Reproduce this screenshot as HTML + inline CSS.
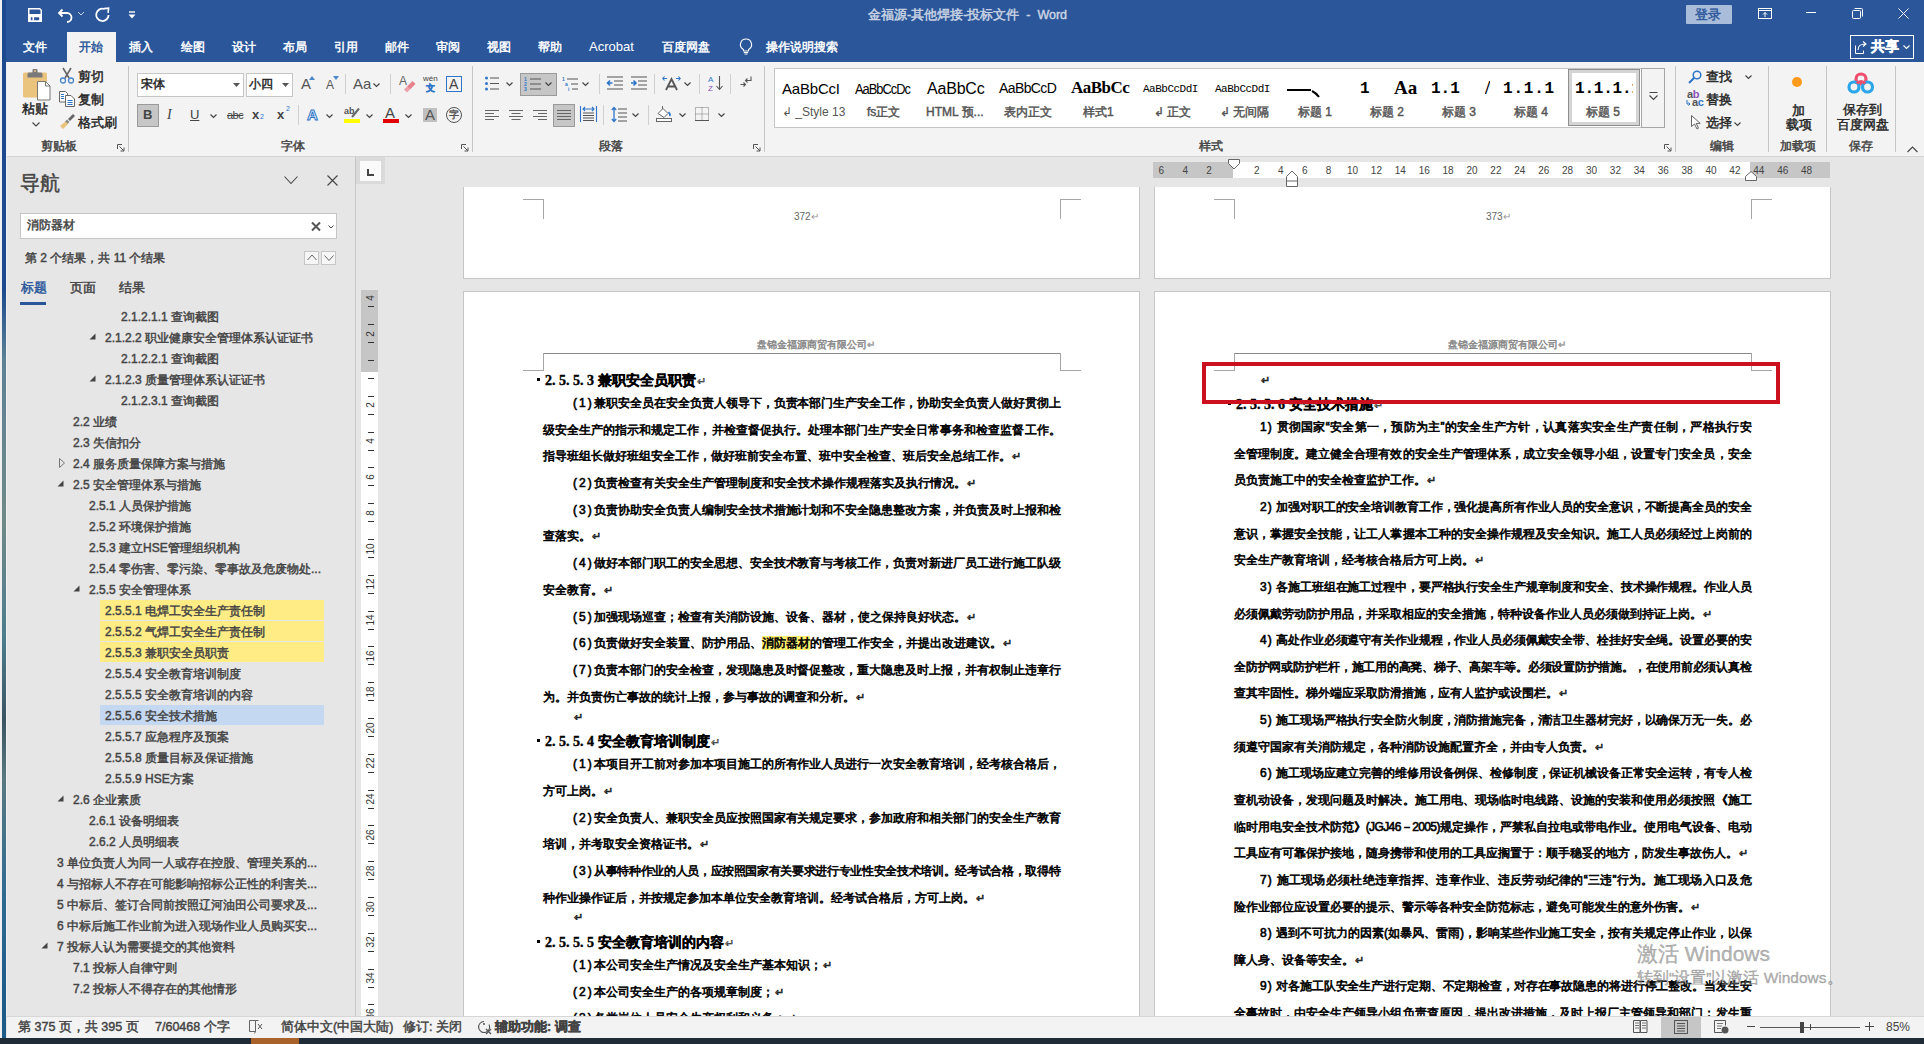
<!DOCTYPE html>
<html><head><meta charset="utf-8"><style>
html,body{margin:0;padding:0;}
body{width:1924px;height:1044px;position:relative;overflow:hidden;background:#e6e6e6;font-family:"Liberation Sans",sans-serif;}
div{box-sizing:border-box;}
.ui{font-size:13px;color:#262626;line-height:16px;}
.tab{font-size:13px;color:#fff;line-height:16px;}
.nav{font-size:13px;color:#444;line-height:16px;}
.doc{font-size:12px;color:#000;line-height:16px;-webkit-text-stroke:0.6px #000;}
.cj{-webkit-text-stroke-width:0.45px;}
.just{text-align:justify;text-align-last:justify;letter-spacing:-0.6px;}
.rm{color:#a0a0a0;font-size:11px;font-weight:normal;margin-left:1px}
.h{font-size:14px;font-weight:bold;color:#000;line-height:18px;-webkit-text-stroke:0.4px #000;}
svg{position:absolute;overflow:visible;}
</style></head><body>
<div style="position:absolute;left:0px;top:0px;width:1924px;height:62px;background:#2b579a"></div>
<div style="position:absolute;left:0px;top:0px;width:2px;height:1044px;background:#f0f0f0"></div>
<div style="position:absolute;left:2px;top:0px;width:4px;height:1044px;background:linear-gradient(#1c4a8e 0px,#1c4a8e 290px,#5c8295 360px,#6f8a88 520px,#4c7c8c 640px,#3a5560 720px,#587a80 780px,#2d6a92 900px,#1c5a88 1010px)"></div>
<div style="position:absolute;left:6px;top:62px;width:1px;height:954px;background:#f2f0f0"></div>
<div class="cj" style="position: absolute; left: 868px; top: 7px; white-space: nowrap; font-size: 12.5px; color: rgb(201, 211, 227); line-height: 16px; width: 199px; text-align: justify; text-align-last: justify;">金福源-其他焊接-投标文件&nbsp; - &nbsp;Word</div>
<svg style="left:27px;top:7px" width="16" height="16" viewBox="0 0 16 16"><path d="M1.75 1.75h11l1.5 1.5v11h-12.5z" fill="none" stroke="#fff" stroke-width="1.5"></path><rect x="1.5" y="7" width="13" height="2.5" fill="#fff"></rect><path d="M1.5 9h13v5.5h-13z M3.8 10.2v3.4h8.4v-3.4z" fill="#fff" fill-rule="evenodd"></path><rect x="5.5" y="10" width="1.6" height="3.6" fill="#fff"></rect></svg>
<svg style="left:57px;top:7px" width="16" height="16" viewBox="0 0 16 16"><path d="M2 6h8a4.5 4.5 0 0 1 0 9" fill="none" stroke="#fff" stroke-width="1.8"></path><path d="M5.5 2.5L2 6l3.5 3.5" fill="none" stroke="#fff" stroke-width="1.8"></path></svg>
<svg style="left:77px;top:11px" width="8" height="6" viewBox="0 0 8 6"><path d="M1 1l3 3 3-3" fill="none" stroke="#c9d3e3" stroke-width="1"></path></svg>
<svg style="left:95px;top:7px" width="16" height="16" viewBox="0 0 16 16"><path d="M9.5 2A6.2 6.2 0 1 0 13.6 8" fill="none" stroke="#fff" stroke-width="1.8"></path><path d="M9 1.6L13.6 1.2 13.1 5.8" fill="none" stroke="#fff" stroke-width="1.6"></path></svg>
<svg style="left:128px;top:11px" width="8" height="9" viewBox="0 0 8 9"><path d="M1 1h6" stroke="#fff" stroke-width="1.4"></path><path d="M0.5 3.5h7l-3.5 4z" fill="#fff"></path></svg>
<div style="position:absolute;left:1686px;top:5px;width:46px;height:19px;background:#a9bcd9;border-radius:1px"></div>
<div class="cj" style="position: absolute; left: 1695px; top: 7px; white-space: nowrap; font-size: 13px; color: rgb(43, 87, 154); line-height: 16px; width: 26px; text-align: justify; text-align-last: justify;">登录</div>
<svg style="left:1758px;top:8px" width="14" height="11" viewBox="0 0 14 11"><rect x="0.5" y="0.5" width="13" height="10" fill="none" stroke="#fff" stroke-width="1"></rect><path d="M0.5 2.5h13" stroke="#fff"></path><path d="M7 9V4.5M5 6.5l2-2 2 2" fill="none" stroke="#fff"></path></svg>
<div style="position:absolute;left:1806px;top:12px;width:10px;height:1px;background:#fff"></div>
<svg style="left:1852px;top:8px" width="11" height="11" viewBox="0 0 11 11"><rect x="0.5" y="2.5" width="8" height="8" rx="1" fill="none" stroke="#fff"></rect><path d="M2.5 0.5h7a1 1 0 0 1 1 1v7" fill="none" stroke="#fff"></path></svg>
<svg style="left:1898px;top:8px" width="11" height="11" viewBox="0 0 11 11"><path d="M0.5 0.5l10 10M10.5 0.5l-10 10" stroke="#fff" stroke-width="1"></path></svg>
<div style="position:absolute;left:1850px;top:35px;width:64px;height:24px;border:1px solid #fff"></div>
<svg style="left:1855px;top:40px" width="13" height="14" viewBox="0 0 13 14"><path d="M0.5 5.5v8h8v-3" fill="none" stroke="#fff"></path><path d="M3 10c0-4 3-6 7-6M8 1.5l3 2.5-3 2.5" fill="none" stroke="#fff" stroke-width="1.1"></path></svg>
<div class="cj" style="position: absolute; left: 1871px; top: 38px; white-space: nowrap; font-size: 14px; color: rgb(255, 255, 255); font-weight: bold; line-height: 17px; width: 28px; text-align: justify; text-align-last: justify;">共享</div>
<svg style="left:1903px;top:45px" width="7" height="5" viewBox="0 0 7 5"><path d="M0.5 0.5l3 3 3-3" fill="none" stroke="#fff" stroke-width="1.2"></path></svg>
<div style="position:absolute;left:67px;top:32px;width:49px;height:30px;background:#f3f3f3"></div>
<div class="cj" style="position: absolute; left: 23px; top: 39px; white-space: nowrap; font-size: 12px; color: rgb(255, 255, 255); line-height: 16px; width: 24px; text-align: justify; text-align-last: justify;">文件</div>
<div class="cj" style="position: absolute; left: 79px; top: 39px; white-space: nowrap; font-size: 12px; color: rgb(43, 87, 154); line-height: 16px; width: 24px; text-align: justify; text-align-last: justify;">开始</div>
<div class="cj" style="position: absolute; left: 129px; top: 39px; white-space: nowrap; font-size: 12px; color: rgb(255, 255, 255); line-height: 16px; width: 24px; text-align: justify; text-align-last: justify;">插入</div>
<div class="cj" style="position: absolute; left: 181px; top: 39px; white-space: nowrap; font-size: 12px; color: rgb(255, 255, 255); line-height: 16px; width: 24px; text-align: justify; text-align-last: justify;">绘图</div>
<div class="cj" style="position: absolute; left: 232px; top: 39px; white-space: nowrap; font-size: 12px; color: rgb(255, 255, 255); line-height: 16px; width: 24px; text-align: justify; text-align-last: justify;">设计</div>
<div class="cj" style="position: absolute; left: 283px; top: 39px; white-space: nowrap; font-size: 12px; color: rgb(255, 255, 255); line-height: 16px; width: 24px; text-align: justify; text-align-last: justify;">布局</div>
<div class="cj" style="position: absolute; left: 334px; top: 39px; white-space: nowrap; font-size: 12px; color: rgb(255, 255, 255); line-height: 16px; width: 24px; text-align: justify; text-align-last: justify;">引用</div>
<div class="cj" style="position: absolute; left: 385px; top: 39px; white-space: nowrap; font-size: 12px; color: rgb(255, 255, 255); line-height: 16px; width: 24px; text-align: justify; text-align-last: justify;">邮件</div>
<div class="cj" style="position: absolute; left: 436px; top: 39px; white-space: nowrap; font-size: 12px; color: rgb(255, 255, 255); line-height: 16px; width: 24px; text-align: justify; text-align-last: justify;">审阅</div>
<div class="cj" style="position: absolute; left: 487px; top: 39px; white-space: nowrap; font-size: 12px; color: rgb(255, 255, 255); line-height: 16px; width: 24px; text-align: justify; text-align-last: justify;">视图</div>
<div class="cj" style="position: absolute; left: 538px; top: 39px; white-space: nowrap; font-size: 12px; color: rgb(255, 255, 255); line-height: 16px; width: 24px; text-align: justify; text-align-last: justify;">帮助</div>
<div style="position:absolute;left:589px;top:39px;white-space:nowrap;font-size:13px;color:#fff;line-height:16px">Acrobat</div>
<div class="cj" style="position: absolute; left: 662px; top: 39px; white-space: nowrap; font-size: 12px; color: rgb(255, 255, 255); line-height: 16px; width: 48px; text-align: justify; text-align-last: justify;">百度网盘</div>
<div class="cj" style="position: absolute; left: 766px; top: 39px; white-space: nowrap; font-size: 12px; color: rgb(255, 255, 255); line-height: 16px; width: 72px; text-align: justify; text-align-last: justify;">操作说明搜索</div>
<svg style="left:739px;top:38px" width="14" height="17" viewBox="0 0 14 17"><path d="M7 1a5.5 5.5 0 0 0-3.2 10c.7.6.9 1.2.9 2h4.6c0-.8.2-1.4.9-2A5.5 5.5 0 0 0 7 1z" fill="none" stroke="#fff" stroke-width="1.1"></path><path d="M4.8 14.5h4.4M5.5 16h3" stroke="#fff" stroke-width="1"></path></svg>
<div style="position:absolute;left:7px;top:62px;width:1917px;height:94px;background:#f3f3f3"></div>
<div style="position:absolute;left:7px;top:156px;width:1917px;height:1px;background:#d4d4d4"></div>
<div style="position:absolute;left:128px;top:66px;width:1px;height:86px;background:#c6c6c6"></div>
<div style="position:absolute;left:472px;top:66px;width:1px;height:86px;background:#c6c6c6"></div>
<div style="position:absolute;left:764px;top:66px;width:1px;height:86px;background:#c6c6c6"></div>
<div style="position:absolute;left:1675px;top:66px;width:1px;height:86px;background:#c6c6c6"></div>
<div style="position:absolute;left:1768px;top:66px;width:1px;height:86px;background:#c6c6c6"></div>
<div style="position:absolute;left:1826px;top:66px;width:1px;height:86px;background:#c6c6c6"></div>
<div style="position:absolute;left:1895px;top:66px;width:1px;height:86px;background:#c6c6c6"></div>
<div class="cj" style="position: absolute; left: 41px; top: 139px; white-space: nowrap; font-size: 12px; color: rgb(68, 68, 68); line-height: 15px; width: 36px; text-align: justify; text-align-last: justify;">剪贴板</div>
<div class="cj" style="position: absolute; left: 281px; top: 139px; white-space: nowrap; font-size: 12px; color: rgb(68, 68, 68); line-height: 15px; width: 24px; text-align: justify; text-align-last: justify;">字体</div>
<div class="cj" style="position: absolute; left: 599px; top: 139px; white-space: nowrap; font-size: 12px; color: rgb(68, 68, 68); line-height: 15px; width: 24px; text-align: justify; text-align-last: justify;">段落</div>
<div class="cj" style="position: absolute; left: 1199px; top: 139px; white-space: nowrap; font-size: 12px; color: rgb(68, 68, 68); line-height: 15px; width: 24px; text-align: justify; text-align-last: justify;">样式</div>
<div class="cj" style="position: absolute; left: 1710px; top: 139px; white-space: nowrap; font-size: 12px; color: rgb(68, 68, 68); line-height: 15px; width: 24px; text-align: justify; text-align-last: justify;">编辑</div>
<div class="cj" style="position: absolute; left: 1780px; top: 139px; white-space: nowrap; font-size: 12px; color: rgb(68, 68, 68); line-height: 15px; width: 36px; text-align: justify; text-align-last: justify;">加载项</div>
<div class="cj" style="position: absolute; left: 1849px; top: 139px; white-space: nowrap; font-size: 12px; color: rgb(68, 68, 68); line-height: 15px; width: 24px; text-align: justify; text-align-last: justify;">保存</div>
<svg style="left:117px;top:144px" width="8" height="8" viewBox="0 0 8 8"><path d="M0.5 5V0.5H5" fill="none" stroke="#555"></path><path d="M2.5 2.5l4.5 4.5M7 3.5v3.5H3.5" fill="none" stroke="#555"></path></svg>
<svg style="left:461px;top:144px" width="8" height="8" viewBox="0 0 8 8"><path d="M0.5 5V0.5H5" fill="none" stroke="#555"></path><path d="M2.5 2.5l4.5 4.5M7 3.5v3.5H3.5" fill="none" stroke="#555"></path></svg>
<svg style="left:753px;top:144px" width="8" height="8" viewBox="0 0 8 8"><path d="M0.5 5V0.5H5" fill="none" stroke="#555"></path><path d="M2.5 2.5l4.5 4.5M7 3.5v3.5H3.5" fill="none" stroke="#555"></path></svg>
<svg style="left:1664px;top:144px" width="8" height="8" viewBox="0 0 8 8"><path d="M0.5 5V0.5H5" fill="none" stroke="#555"></path><path d="M2.5 2.5l4.5 4.5M7 3.5v3.5H3.5" fill="none" stroke="#555"></path></svg>
<svg style="left:1907px;top:146px" width="11" height="7" viewBox="0 0 11 7"><path d="M0.5 6l5-5 5 5" fill="none" stroke="#444" stroke-width="1.1"></path></svg>
<svg style="left:22px;top:68px" width="30" height="33" viewBox="0 0 30 33"><rect x="1" y="4.5" width="24" height="25" rx="1.5" fill="#eac37c"></rect><path d="M5.5 9.5v-3.5a1.5 1.5 0 0 1 1.5-1.5h3.5v-2.5a1 1 0 0 1 1-1h3a1 1 0 0 1 1 1v2.5h3.5a1.5 1.5 0 0 1 1.5 1.5v3.5z" fill="#7a7a7a"></path><circle cx="13" cy="3" r="1" fill="#eac37c"></circle><path d="M15.5 13.5h8l4.5 4.5v14h-12.5z" fill="#fff" stroke="#777" stroke-width="1"></path><path d="M23.5 13.5v4.5h4.5" fill="none" stroke="#777"></path></svg>
<div class="cj" style="position: absolute; left: 22px; top: 101px; white-space: nowrap; font-size: 13px; color: rgb(38, 38, 38); line-height: 16px; width: 26px; text-align: justify; text-align-last: justify;">粘贴</div>
<svg style="left:32px;top:122px" width="8" height="5" viewBox="0 0 8 5"><path d="M0.5 0.5l3.5 3.5 3.5-3.5" fill="none" stroke="#444" stroke-width="1.1"></path></svg>
<svg style="left:59px;top:67px" width="16" height="17" viewBox="0 0 16 17"><path d="M4 1l6 10M12 1L6 11" stroke="#666" stroke-width="1.6"></path><circle cx="4" cy="13.5" r="2.5" fill="none" stroke="#4a86c8" stroke-width="1.3"></circle><circle cx="12" cy="13.5" r="2.5" fill="none" stroke="#4a86c8" stroke-width="1.3"></circle></svg>
<div class="cj" style="position: absolute; left: 78px; top: 69px; white-space: nowrap; font-size: 13px; color: rgb(38, 38, 38); line-height: 16px; width: 26px; text-align: justify; text-align-last: justify;">剪切</div>
<svg style="left:59px;top:91px" width="16" height="16" viewBox="0 0 16 16"><path d="M0.5 0.5h6l2 2v8.5h-8z" fill="#fff" stroke="#666"></path><path d="M6.5 4.5h5.5l3.5 3.5v7.5h-9z" fill="#fff" stroke="#666"></path><path d="M2 3.5h3M2 5.5h3M2 7.5h3M8.5 9.5h5M8.5 11.5h5M8.5 13.5h5" stroke="#2e75c8" stroke-width="1"></path></svg>
<div class="cj" style="position: absolute; left: 78px; top: 92px; white-space: nowrap; font-size: 13px; color: rgb(38, 38, 38); line-height: 16px; width: 26px; text-align: justify; text-align-last: justify;">复制</div>
<svg style="left:59px;top:114px" width="16" height="15" viewBox="0 0 16 15"><path d="M9 5l5-5 2 2-5 5z" fill="#666"></path><path d="M8 5.5l2.5 2.5-2 2-2.5-2.5z" fill="#888"></path><path d="M6.5 7.5l2.5 2.5L4 15 1 12z" fill="#e9c27a"></path></svg>
<div class="cj" style="position: absolute; left: 78px; top: 115px; white-space: nowrap; font-size: 13px; color: rgb(38, 38, 38); line-height: 16px; width: 39px; text-align: justify; text-align-last: justify;">格式刷</div>
<div style="position:absolute;left:137px;top:73px;width:107px;height:24px;background:#fff;border:1px solid #c6c6c6"></div>
<div class="cj" style="position: absolute; left: 141px; top: 77px; white-space: nowrap; font-size: 12px; color: rgb(38, 38, 38); line-height: 15px; width: 24px; text-align: justify; text-align-last: justify;">宋体</div>
<svg style="left:233px;top:83px" width="7" height="4" viewBox="0 0 7 4"><path d="M0 0h7L3.5 4z" fill="#555"></path></svg>
<div style="position:absolute;left:246px;top:73px;width:47px;height:24px;background:#fff;border:1px solid #c6c6c6"></div>
<div class="cj" style="position: absolute; left: 249px; top: 77px; white-space: nowrap; font-size: 12px; color: rgb(38, 38, 38); line-height: 15px; width: 24px; text-align: justify; text-align-last: justify;">小四</div>
<svg style="left:282px;top:83px" width="7" height="4" viewBox="0 0 7 4"><path d="M0 0h7L3.5 4z" fill="#555"></path></svg>
<div style="position:absolute;left:301px;top:75px;white-space:nowrap;font-size:15px;color:#555;line-height:17px">A</div>
<svg style="left:309px;top:76px" width="6" height="4" viewBox="0 0 6 4"><path d="M0 4h6L3 0z" fill="#4a86c8"></path></svg>
<div style="position:absolute;left:326px;top:78px;white-space:nowrap;font-size:12px;color:#555;line-height:14px">A</div>
<svg style="left:333px;top:76px" width="6" height="4" viewBox="0 0 6 4"><path d="M0 0h6L3 4z" fill="#4a86c8"></path></svg>
<div style="position:absolute;left:345px;top:74px;width:1px;height:20px;background:#d0d0d0"></div>
<div style="position:absolute;left:353px;top:75px;white-space:nowrap;font-size:15px;color:#555;line-height:17px">Aa</div>
<svg style="left:373px;top:83px" width="7" height="5" viewBox="0 0 7 5"><path d="M0.5 0.5l3 3 3-3" fill="none" stroke="#444" stroke-width="1.2"></path></svg>
<div style="position:absolute;left:390px;top:74px;width:1px;height:20px;background:#d0d0d0"></div>
<div style="position:absolute;left:399px;top:74px;white-space:nowrap;font-size:12px;color:#666;line-height:14px">A</div>
<svg style="left:401px;top:78px" width="15" height="15" viewBox="0 0 15 15"><path d="M6 8.5L11.5 3 14.5 6 9 11.5z" fill="#e8818f"></path><path d="M3 11.5L6 8.5 9 11.5 6 14.5z" fill="#f0a0aa"></path></svg>
<div style="position:absolute;left:423px;top:74px;white-space:nowrap;font-size:8px;color:#444;line-height:9px">wén</div>
<div class="cj" style="position: absolute; left: 426px; top: 83px; white-space: nowrap; font-size: 9px; color: rgb(46, 117, 200); line-height: 10px; font-weight: bold; width: 9px; text-align: justify; text-align-last: justify;">文</div>
<div style="position:absolute;left:446px;top:76px;width:16px;height:16px;border:1px solid #2e75c8"></div>
<div style="position:absolute;left:449px;top:76px;white-space:nowrap;font-size:14px;color:#444;line-height:16px">A</div>
<div style="position:absolute;left:139px;top:104px;white-space:nowrap;"></div>
<div style="position:absolute;left:137px;top:104px;width:22px;height:23px;background:#c6c6c6;border:1px solid #9a9a9a"></div>
<div style="position:absolute;left:143px;top:107px;white-space:nowrap;font-size:13px;color:#444;font-weight:bold;line-height:16px">B</div>
<div style="position:absolute;left:167px;top:107px;white-space:nowrap;font-size:14px;color:#444;font-family:Liberation Serif;font-style:italic;line-height:16px">I</div>
<div style="position:absolute;left:190px;top:107px;white-space:nowrap;font-size:13px;color:#444;line-height:15px;text-decoration:underline">U</div>
<svg style="left:210px;top:114px" width="7" height="5" viewBox="0 0 7 5"><path d="M0.5 0.5l3 3 3-3" fill="none" stroke="#444" stroke-width="1.2"></path></svg>
<div style="position:absolute;left:227px;top:108px;white-space:nowrap;font-size:11px;color:#444;line-height:14px;letter-spacing:-0.5px"><s>abc</s></div>
<div style="position:absolute;left:252px;top:107px;white-space:nowrap;font-size:13px;color:#444;font-weight:bold;line-height:15px">x</div>
<div style="position:absolute;left:260px;top:113px;white-space:nowrap;font-size:7px;color:#2e75c8;line-height:8px">2</div>
<div style="position:absolute;left:277px;top:107px;white-space:nowrap;font-size:13px;color:#444;font-weight:bold;line-height:15px">x</div>
<div style="position:absolute;left:286px;top:105px;white-space:nowrap;font-size:7px;color:#2e75c8;line-height:8px">2</div>
<div style="position:absolute;left:298px;top:105px;width:1px;height:20px;background:#d0d0d0"></div>
<div style="position:absolute;left:307px;top:106px;white-space:nowrap;font-size:15px;color:#fff;font-weight:bold;line-height:17px;-webkit-text-stroke:1px #2e75c8">A</div>
<svg style="left:326px;top:114px" width="7" height="5" viewBox="0 0 7 5"><path d="M0.5 0.5l3 3 3-3" fill="none" stroke="#444" stroke-width="1.2"></path></svg>
<div style="position:absolute;left:344px;top:106px;white-space:nowrap;font-size:9px;color:#555;font-weight:bold;line-height:10px">ab</div>
<svg style="left:349px;top:108px" width="11" height="10" viewBox="0 0 11 10"><path d="M10 0.5L3 9" stroke="#666" stroke-width="2"></path></svg>
<div style="position:absolute;left:344px;top:119px;width:16px;height:4px;background:#ffff00"></div>
<svg style="left:366px;top:114px" width="7" height="5" viewBox="0 0 7 5"><path d="M0.5 0.5l3 3 3-3" fill="none" stroke="#444" stroke-width="1.2"></path></svg>
<div style="position:absolute;left:385px;top:104px;white-space:nowrap;font-size:15px;color:#444;line-height:17px">A</div>
<div style="position:absolute;left:383px;top:119px;width:16px;height:4px;background:#e00000"></div>
<svg style="left:405px;top:114px" width="7" height="5" viewBox="0 0 7 5"><path d="M0.5 0.5l3 3 3-3" fill="none" stroke="#444" stroke-width="1.2"></path></svg>
<div style="position:absolute;left:423px;top:108px;width:14px;height:14px;background:#c0c0c0"></div>
<div style="position:absolute;left:425px;top:106px;white-space:nowrap;font-size:15px;color:#555;line-height:17px">A</div>
<svg style="left:446px;top:107px" width="16" height="16" viewBox="0 0 16 16"><circle cx="8" cy="8" r="7.5" fill="none" stroke="#555" stroke-width="1"></circle></svg>
<div class="cj" style="position: absolute; left: 449px; top: 108px; white-space: nowrap; font-size: 10px; color: rgb(85, 85, 85); line-height: 14px; width: 10px; text-align: justify; text-align-last: justify;">字</div>
<svg style="left:485px;top:76px" width="14" height="15" viewBox="0 0 14 15"><circle cx="1.5" cy="2" r="1.5" fill="#2e75c8"></circle><circle cx="1.5" cy="7.5" r="1.5" fill="#2e75c8"></circle><circle cx="1.5" cy="13" r="1.5" fill="#2e75c8"></circle><path d="M5 2h9M5 7.5h9M5 13h9" stroke="#555" stroke-width="1"></path></svg>
<svg style="left:506px;top:82px" width="7" height="5" viewBox="0 0 7 5"><path d="M0.5 0.5l3 3 3-3" fill="none" stroke="#444" stroke-width="1.2"></path></svg>
<div style="position:absolute;left:520px;top:73px;width:37px;height:23px;background:#c6c6c6;border:1px solid #9a9a9a"></div>
<svg style="left:524px;top:76px" width="18" height="16" viewBox="0 0 18 16"><text x="0" y="5" font-size="5" fill="#2e75c8" font-family="Liberation Sans" font-weight="bold">1</text><text x="0" y="10" font-size="5" fill="#2e75c8" font-family="Liberation Sans" font-weight="bold">2</text><text x="0" y="15" font-size="5" fill="#2e75c8" font-family="Liberation Sans" font-weight="bold">3</text><path d="M6 3h11M6 8h11M6 13h11" stroke="#555" stroke-width="1"></path></svg>
<svg style="left:545px;top:82px" width="7" height="5" viewBox="0 0 7 5"><path d="M0.5 0.5l3 3 3-3" fill="none" stroke="#444" stroke-width="1.2"></path></svg>
<svg style="left:562px;top:76px" width="17" height="15" viewBox="0 0 17 15"><text x="0" y="5" font-size="5" fill="#2e75c8" font-family="Liberation Sans" font-weight="bold">1</text><text x="3" y="10" font-size="5" fill="#2e75c8" font-family="Liberation Sans" font-weight="bold">a</text><text x="6" y="15" font-size="5" fill="#2e75c8" font-family="Liberation Sans" font-weight="bold">i</text><path d="M5 3h11M9 8h7M10 13h6" stroke="#555" stroke-width="1"></path></svg>
<svg style="left:582px;top:82px" width="7" height="5" viewBox="0 0 7 5"><path d="M0.5 0.5l3 3 3-3" fill="none" stroke="#444" stroke-width="1.2"></path></svg>
<div style="position:absolute;left:599px;top:74px;width:1px;height:20px;background:#d0d0d0"></div>
<svg style="left:607px;top:76px" width="17" height="15" viewBox="0 0 17 15"><path d="M0 1h16M7 5h9M7 9h9M0 13h16" stroke="#555" stroke-width="1.1"></path><path d="M0.5 7h5M3 4.5L0.5 7 3 9.5" fill="none" stroke="#2e75c8" stroke-width="1.6"></path></svg>
<svg style="left:631px;top:76px" width="17" height="15" viewBox="0 0 17 15"><path d="M0 1h16M7 5h9M7 9h9M0 13h16" stroke="#555" stroke-width="1.1"></path><path d="M0 7h5M2.5 4.5L5 7 2.5 9.5" fill="none" stroke="#2e75c8" stroke-width="1.6"></path></svg>
<div style="position:absolute;left:654px;top:74px;width:1px;height:20px;background:#d0d0d0"></div>
<svg style="left:662px;top:75px" width="19" height="16" viewBox="0 0 19 16"><path d="M4 15l5.5-11L15 15M6 11.5h7" fill="none" stroke="#555" stroke-width="1.8"></path><path d="M1 3.5h4M2.5 1.5L0.8 3.5 2.5 5.5M18 3.5h-4M16.5 1.5l1.7 2-1.7 2" fill="none" stroke="#2e75c8" stroke-width="1.1"></path></svg>
<svg style="left:684px;top:82px" width="7" height="5" viewBox="0 0 7 5"><path d="M0.5 0.5l3 3 3-3" fill="none" stroke="#444" stroke-width="1.2"></path></svg>
<div style="position:absolute;left:699px;top:74px;width:1px;height:20px;background:#d0d0d0"></div>
<svg style="left:708px;top:75px" width="16" height="16" viewBox="0 0 16 16"><text x="0" y="7" font-size="8" fill="#2e75c8" font-family="Liberation Sans">A</text><text x="0" y="15.5" font-size="8" fill="#8a4fb5" font-family="Liberation Sans">Z</text><path d="M11.5 1v13M8.5 11l3 3.5 3-3.5" fill="none" stroke="#555" stroke-width="1.1"></path></svg>
<div style="position:absolute;left:730px;top:74px;width:1px;height:20px;background:#d0d0d0"></div>
<svg style="left:740px;top:76px" width="12" height="13" viewBox="0 0 12 13"><path d="M11 0.5v4H5.5M7.5 2.5l-2 2 2 2" fill="none" stroke="#555" stroke-width="1.1"></path><path d="M0.5 8.5h5M3.5 6.5l2 2-2 2" fill="none" stroke="#555" stroke-width="1.1"></path></svg>
<svg style="left:485px;top:109px" width="14" height="12" viewBox="0 0 14 12"><path d="M0 1.5h14M0 4.5h9M0 7.5h14M0 10.5h9" stroke="#666" stroke-width="1"></path></svg>
<svg style="left:509px;top:109px" width="14" height="12" viewBox="0 0 14 12"><path d="M0 1.5h14M2.5 4.5h9M0 7.5h14M2.5 10.5h9" stroke="#666" stroke-width="1"></path></svg>
<svg style="left:533px;top:109px" width="14" height="12" viewBox="0 0 14 12"><path d="M0 1.5h14M5 4.5h9M0 7.5h14M5 10.5h9" stroke="#666" stroke-width="1"></path></svg>
<div style="position:absolute;left:553px;top:104px;width:22px;height:23px;background:#c6c6c6;border:1px solid #9a9a9a"></div>
<svg style="left:557px;top:109px" width="14" height="12" viewBox="0 0 14 12"><path d="M0 1.5h14M0 4.5h14M0 7.5h14M0 10.5h14" stroke="#666" stroke-width="1"></path></svg>
<svg style="left:580px;top:106px" width="17" height="16" viewBox="0 0 17 16"><path d="M0.5 0v16M16.5 0v16" stroke="#2e75c8" stroke-width="1.1"></path><path d="M3 3h11M5 1l-2 2 2 2M12 1l2 2-2 2" fill="none" stroke="#2e75c8" stroke-width="1.1"></path><path d="M3 7h11M3 9.5h11M3 12h11M3 14.5h11" stroke="#555" stroke-width="1"></path></svg>
<div style="position:absolute;left:603px;top:105px;width:1px;height:20px;background:#d0d0d0"></div>
<svg style="left:611px;top:106px" width="16" height="17" viewBox="0 0 16 17"><path d="M3 1.5v14M0.8 4l2.2-2.5L5.2 4M0.8 13l2.2 2.5 2.2-2.5" fill="none" stroke="#2e75c8" stroke-width="1.3"></path><path d="M7 3h9M7 7h9M7 11h9M7 15h9" stroke="#555" stroke-width="1.1"></path></svg>
<svg style="left:632px;top:113px" width="7" height="5" viewBox="0 0 7 5"><path d="M0.5 0.5l3 3 3-3" fill="none" stroke="#444" stroke-width="1.2"></path></svg>
<div style="position:absolute;left:648px;top:105px;width:1px;height:20px;background:#d0d0d0"></div>
<svg style="left:656px;top:105px" width="17" height="17" viewBox="0 0 17 17"><path d="M2 8.5l5-5 5 5-4 4z" fill="#fff" stroke="#666"></path><path d="M6.5 4V1" stroke="#666"></path><path d="M12.5 7c1.5 1.5 2 3 1 4" fill="none" stroke="#2e75c8" stroke-width="1.6"></path><rect x="0.5" y="13.5" width="15" height="3" fill="#fff" stroke="#666"></rect></svg>
<svg style="left:679px;top:113px" width="7" height="5" viewBox="0 0 7 5"><path d="M0.5 0.5l3 3 3-3" fill="none" stroke="#444" stroke-width="1.2"></path></svg>
<svg style="left:695px;top:107px" width="14" height="14" viewBox="0 0 14 14"><path d="M0.5 0.5h13v13h-13zM7 0.5v13M0.5 7h13" fill="none" stroke="#777" stroke-width="1" stroke-dasharray="1 1"></path><path d="M0 13.5h14" stroke="#555"></path></svg>
<svg style="left:718px;top:113px" width="7" height="5" viewBox="0 0 7 5"><path d="M0.5 0.5l3 3 3-3" fill="none" stroke="#444" stroke-width="1.2"></path></svg>
<div style="position:absolute;left:774px;top:68px;width:868px;height:60px;background:#fff;border:1px solid #c6c6c6"></div>
<div style="position:absolute;left:1568px;top:69px;width:72px;height:57px;border:1px solid #8f8f8f;box-shadow:inset 0 0 0 3px #d4d4d4"></div>
<div style="position:absolute;left:1641px;top:68px;width:24px;height:60px;background:#f3f3f3;border:1px solid #a6a6a6"></div>
<svg style="left:1649px;top:92px" width="9" height="9" viewBox="0 0 9 9"><path d="M0.5 0.5h8" stroke="#444"></path><path d="M0.5 3.5l4 4 4-4" fill="none" stroke="#444" stroke-width="1.1"></path></svg>
<div style="position:absolute;left:782px;top:80px;white-space:nowrap;font-size:15px;color:#000;line-height:17px;letter-spacing:-0.2px">AaBbCcI</div>
<div style="position:absolute;left:855px;top:81px;white-space:nowrap;font-size:14px;color:#000;line-height:17px;letter-spacing:-1.1px;transform:scaleX(0.92);transform-origin:left">AaBbCcDc</div>
<div style="position:absolute;left:927px;top:80px;white-space:nowrap;font-size:16px;color:#000;line-height:17px;letter-spacing:-0.2px">AaBbCc</div>
<div style="position:absolute;left:999px;top:80px;white-space:nowrap;font-size:14px;color:#000;line-height:17px;letter-spacing:-0.6px">AaBbCcD</div>
<div style="position:absolute;left:1071px;top:79px;white-space:nowrap;font-size:17px;color:#000;line-height:18px;font-weight:bold;font-family:Liberation Serif;letter-spacing:-0.5px">AaBbCc</div>
<div style="position:absolute;left:1143px;top:82px;white-space:nowrap;font-size:11px;color:#000;line-height:14px;font-family:Liberation Mono;letter-spacing:-0.5px">AaBbCcDdI</div>
<div style="position:absolute;left:1215px;top:82px;white-space:nowrap;font-size:11px;color:#000;line-height:14px;font-family:Liberation Mono;letter-spacing:-0.5px">AaBbCcDdI</div>
<div style="position:absolute;left:1360px;top:79px;white-space:nowrap;font-size:16px;color:#000;line-height:20px;font-weight:bold;font-family:Liberation Mono">1</div>
<div style="position:absolute;left:1394px;top:78px;white-space:nowrap;font-size:19px;color:#000;line-height:20px;font-weight:bold;font-family:Liberation Serif">Aa</div>
<div style="position:absolute;left:1431px;top:79px;white-space:nowrap;font-size:16px;color:#000;line-height:20px;font-weight:bold;font-family:Liberation Mono">1.1</div>
<div style="position:absolute;left:1485px;top:78px;white-space:nowrap;font-size:19px;color:#000;line-height:20px;font-weight:bold;font-family:Liberation Serif;width:5px;overflow:hidden">/</div>
<div style="position:absolute;left:1503px;top:79px;white-space:nowrap;font-size:16px;color:#000;line-height:20px;font-weight:bold;font-family:Liberation Mono;letter-spacing:0.8px">1.1.1</div>
<div style="position:absolute;left:1575px;top:79px;white-space:nowrap;font-size:16px;color:#000;line-height:20px;font-weight:bold;font-family:Liberation Mono;width:58px;overflow:hidden;letter-spacing:-0.2px">1.1.1.1</div>
<div style="position:absolute;left:1287px;top:89px;width:24px;height:2px;background:#000"></div>
<svg style="left:1312px;top:91px" width="8" height="6" viewBox="0 0 8 6"><path d="M0 0c2 1 5 3 7 6" stroke="#000" stroke-width="2" fill="none"></path></svg>
<div style="position:absolute;left:782px;top:105px;white-space:nowrap;font-size:12px;color:#555;line-height:15px">↲ _Style 13</div>
<div class="cj" style="position: absolute; left: 867px; top: 105px; white-space: nowrap; font-size: 12px; color: rgb(85, 85, 85); line-height: 15px; width: 33.3px; text-align: justify; text-align-last: justify;">fs正文</div>
<div class="cj" style="position: absolute; left: 926px; top: 105px; white-space: nowrap; font-size: 12px; color: rgb(85, 85, 85); line-height: 15px; width: 57.6px; text-align: justify; text-align-last: justify;">HTML 预...</div>
<div class="cj" style="position: absolute; left: 1004px; top: 105px; white-space: nowrap; font-size: 12px; color: rgb(85, 85, 85); line-height: 15px; width: 48px; text-align: justify; text-align-last: justify;">表内正文</div>
<div class="cj" style="position: absolute; left: 1083px; top: 105px; white-space: nowrap; font-size: 12px; color: rgb(85, 85, 85); line-height: 15px; width: 30.7px; text-align: justify; text-align-last: justify;">样式1</div>
<div class="cj" style="position: absolute; left: 1154px; top: 105px; white-space: nowrap; font-size: 12px; color: rgb(85, 85, 85); line-height: 15px; width: 37.3px; text-align: justify; text-align-last: justify;">↲ 正文</div>
<div class="cj" style="position: absolute; left: 1220px; top: 105px; white-space: nowrap; font-size: 12px; color: rgb(85, 85, 85); line-height: 15px; width: 49.3px; text-align: justify; text-align-last: justify;">↲ 无间隔</div>
<div class="cj" style="position: absolute; left: 1298px; top: 105px; white-space: nowrap; font-size: 12px; color: rgb(85, 85, 85); line-height: 15px; width: 34px; text-align: justify; text-align-last: justify;">标题 1</div>
<div class="cj" style="position: absolute; left: 1370px; top: 105px; white-space: nowrap; font-size: 12px; color: rgb(85, 85, 85); line-height: 15px; width: 34px; text-align: justify; text-align-last: justify;">标题 2</div>
<div class="cj" style="position: absolute; left: 1442px; top: 105px; white-space: nowrap; font-size: 12px; color: rgb(85, 85, 85); line-height: 15px; width: 34px; text-align: justify; text-align-last: justify;">标题 3</div>
<div class="cj" style="position: absolute; left: 1514px; top: 105px; white-space: nowrap; font-size: 12px; color: rgb(85, 85, 85); line-height: 15px; width: 34px; text-align: justify; text-align-last: justify;">标题 4</div>
<div class="cj" style="position: absolute; left: 1586px; top: 105px; white-space: nowrap; font-size: 12px; color: rgb(85, 85, 85); line-height: 15px; width: 34px; text-align: justify; text-align-last: justify;">标题 5</div>
<svg style="left:1688px;top:70px" width="14" height="13" viewBox="0 0 14 13"><circle cx="9" cy="5" r="3.8" fill="none" stroke="#2e75c8" stroke-width="1.5"></circle><path d="M6.2 7.8L1 13" stroke="#2e75c8" stroke-width="2"></path></svg>
<div class="cj" style="position: absolute; left: 1706px; top: 69px; white-space: nowrap; font-size: 13px; color: rgb(38, 38, 38); line-height: 16px; width: 26px; text-align: justify; text-align-last: justify;">查找</div>
<svg style="left:1745px;top:75px" width="7" height="5" viewBox="0 0 7 5"><path d="M0.5 0.5l3 3 3-3" fill="none" stroke="#444" stroke-width="1.2"></path></svg>
<div style="position:absolute;left:1687px;top:89px;white-space:nowrap;font-size:11px;color:#555;line-height:11px;font-weight:bold;letter-spacing:-0.3px">a<span style="color:#8a4fb5">b</span></div>
<div style="position:absolute;left:1692px;top:97px;white-space:nowrap;font-size:11px;color:#555;line-height:11px;font-weight:bold;letter-spacing:-0.3px">a<span style="color:#2e75c8">c</span></div>
<svg style="left:1686px;top:100px" width="5" height="6" viewBox="0 0 5 6"><path d="M1 0v4h3M2.5 2.5L4 4 2.5 5.5" fill="none" stroke="#2e75c8" stroke-width="1"></path></svg>
<div class="cj" style="position: absolute; left: 1706px; top: 92px; white-space: nowrap; font-size: 13px; color: rgb(38, 38, 38); line-height: 16px; width: 26px; text-align: justify; text-align-last: justify;">替换</div>
<svg style="left:1691px;top:115px" width="10" height="15" viewBox="0 0 10 15"><path d="M0.5 0.5v11l3-2.5 2.5 5 1.5-.8-2.3-4.8h4z" fill="#fff" stroke="#555" stroke-width="0.9"></path></svg>
<div class="cj" style="position: absolute; left: 1706px; top: 115px; white-space: nowrap; font-size: 13px; color: rgb(38, 38, 38); line-height: 16px; width: 26px; text-align: justify; text-align-last: justify;">选择</div>
<svg style="left:1734px;top:122px" width="7" height="5" viewBox="0 0 7 5"><path d="M0.5 0.5l3 3 3-3" fill="none" stroke="#444" stroke-width="1.2"></path></svg>
<svg style="left:1791px;top:76px" width="12" height="12" viewBox="0 0 12 12"><circle cx="6" cy="6" r="5" fill="#ff9a1a"></circle></svg>
<div class="cj" style="position: absolute; left: 1792px; top: 103px; white-space: nowrap; font-size: 13px; color: rgb(38, 38, 38); line-height: 16px; width: 13px; text-align: justify; text-align-last: justify;">加</div>
<div class="cj" style="position: absolute; left: 1786px; top: 117px; white-space: nowrap; font-size: 13px; color: rgb(38, 38, 38); line-height: 16px; width: 26px; text-align: justify; text-align-last: justify;">载项</div>
<svg style="left:1847px;top:71px" width="28" height="24" viewBox="0 0 28 24"><circle cx="14" cy="8" r="5" fill="none" stroke="#ef4f6c" stroke-width="3.2"></circle><circle cx="7" cy="16" r="5" fill="none" stroke="#2ba6ea" stroke-width="3.2"></circle><circle cx="20.5" cy="16" r="5" fill="none" stroke="#2ba6ea" stroke-width="3.2"></circle><path d="M10 12.5a5 5 0 0 1 8 0" fill="none" stroke="#ef4f6c" stroke-width="3.2"></path></svg>
<div class="cj" style="position: absolute; left: 1843px; top: 102px; white-space: nowrap; font-size: 13px; color: rgb(38, 38, 38); line-height: 16px; width: 39px; text-align: justify; text-align-last: justify;">保存到</div>
<div class="cj" style="position: absolute; left: 1837px; top: 117px; white-space: nowrap; font-size: 13px; color: rgb(38, 38, 38); line-height: 16px; width: 52px; text-align: justify; text-align-last: justify;">百度网盘</div>
<div style="position:absolute;left:355px;top:157px;width:1px;height:859px;background:#c6c6c6"></div>
<div class="cj" style="position: absolute; left: 20px; top: 171px; white-space: nowrap; font-size: 20px; color: rgb(68, 68, 68); line-height: 24px; width: 40px; text-align: justify; text-align-last: justify;">导航</div>
<svg style="left:284px;top:176px" width="14" height="8" viewBox="0 0 14 8"><path d="M0.5 0.5l6.5 7 6.5-7" fill="none" stroke="#444" stroke-width="1.1"></path></svg>
<svg style="left:327px;top:175px" width="11" height="11" viewBox="0 0 11 11"><path d="M0.5 0.5l10 10M10.5 0.5l-10 10" stroke="#444" stroke-width="1.1"></path></svg>
<div style="position:absolute;left:20px;top:213px;width:317px;height:26px;background:#fff;border:1px solid #c6c6c6"></div>
<div class="cj" style="position: absolute; left: 27px; top: 217px; white-space: nowrap; font-size: 12px; color: rgb(68, 68, 68); line-height: 16px; width: 48px; text-align: justify; text-align-last: justify;">消防器材</div>
<svg style="left:311px;top:222px" width="10" height="9" viewBox="0 0 10 9"><path d="M1 0.5l8 8M9 0.5l-8 8" stroke="#555" stroke-width="2"></path></svg>
<svg style="left:328px;top:225px" width="6" height="4" viewBox="0 0 6 4"><path d="M0.5 0.5l2.5 2.5 2.5-2.5" fill="none" stroke="#444" stroke-width="1"></path></svg>
<div class="cj" style="position: absolute; left: 25px; top: 250px; white-space: nowrap; font-size: 12px; color: rgb(68, 68, 68); line-height: 16px; width: 140.5px; text-align: justify; text-align-last: justify;">第 2 个结果，共 11 个结果</div>
<div style="position:absolute;left:304px;top:251px;width:15px;height:14px;background:#f6f6f6;border:1px solid #c6c6c6"></div>
<div style="position:absolute;left:321px;top:251px;width:15px;height:14px;background:#f6f6f6;border:1px solid #c6c6c6"></div>
<svg style="left:307px;top:254px" width="10" height="7" viewBox="0 0 10 7"><path d="M0.5 6l4.5-5 4.5 5" fill="none" stroke="#666" stroke-width="1"></path></svg>
<svg style="left:324px;top:255px" width="10" height="7" viewBox="0 0 10 7"><path d="M0.5 0.5l4.5 5 4.5-5" fill="none" stroke="#666" stroke-width="1"></path></svg>
<div class="cj" style="position: absolute; left: 21px; top: 280px; white-space: nowrap; font-size: 12.5px; color: rgb(43, 87, 154); line-height: 16px; width: 26px; text-align: justify; text-align-last: justify;">标题</div>
<div class="cj" style="position: absolute; left: 70px; top: 280px; white-space: nowrap; font-size: 12.5px; color: rgb(68, 68, 68); line-height: 16px; width: 26px; text-align: justify; text-align-last: justify;">页面</div>
<div class="cj" style="position: absolute; left: 119px; top: 280px; white-space: nowrap; font-size: 12.5px; color: rgb(68, 68, 68); line-height: 16px; width: 26px; text-align: justify; text-align-last: justify;">结果</div>
<div style="position:absolute;left:20px;top:302px;width:26px;height:3px;background:#2b579a"></div>
<div class="cj" style="position: absolute; left: 121px; top: 309px; white-space: nowrap; font-size: 12px; color: rgb(68, 68, 68); line-height: 16px; width: 98px; text-align: justify; text-align-last: justify;">2.1.2.1.1 查询截图</div>
<svg style="left:89px;top:333px" width="7" height="7" viewBox="0 0 7 7"><path d="M6.5 0.5v6h-6z" fill="#444"></path></svg>
<div class="cj" style="position: absolute; left: 105px; top: 330px; white-space: nowrap; font-size: 12px; color: rgb(68, 68, 68); line-height: 16px; width: 208px; text-align: justify; text-align-last: justify;">2.1.2.2 职业健康安全管理体系认证证书</div>
<div class="cj" style="position: absolute; left: 121px; top: 351px; white-space: nowrap; font-size: 12px; color: rgb(68, 68, 68); line-height: 16px; width: 98px; text-align: justify; text-align-last: justify;">2.1.2.2.1 查询截图</div>
<svg style="left:89px;top:375px" width="7" height="7" viewBox="0 0 7 7"><path d="M6.5 0.5v6h-6z" fill="#444"></path></svg>
<div class="cj" style="position: absolute; left: 105px; top: 372px; white-space: nowrap; font-size: 12px; color: rgb(68, 68, 68); line-height: 16px; width: 160px; text-align: justify; text-align-last: justify;">2.1.2.3 质量管理体系认证证书</div>
<div class="cj" style="position: absolute; left: 121px; top: 393px; white-space: nowrap; font-size: 12px; color: rgb(68, 68, 68); line-height: 16px; width: 98px; text-align: justify; text-align-last: justify;">2.1.2.3.1 查询截图</div>
<div class="cj" style="position: absolute; left: 73px; top: 414px; white-space: nowrap; font-size: 12px; color: rgb(68, 68, 68); line-height: 16px; width: 44px; text-align: justify; text-align-last: justify;">2.2 业绩</div>
<div class="cj" style="position: absolute; left: 73px; top: 435px; white-space: nowrap; font-size: 12px; color: rgb(68, 68, 68); line-height: 16px; width: 68px; text-align: justify; text-align-last: justify;">2.3 失信扣分</div>
<svg style="left:59px;top:458px" width="6" height="10" viewBox="0 0 6 10"><path d="M0.5 0.5l5 4.5-5 4.5z" fill="none" stroke="#777" stroke-width="1"></path></svg>
<div class="cj" style="position: absolute; left: 73px; top: 456px; white-space: nowrap; font-size: 12px; color: rgb(68, 68, 68); line-height: 16px; width: 152px; text-align: justify; text-align-last: justify;">2.4 服务质量保障方案与措施</div>
<svg style="left:57px;top:480px" width="7" height="7" viewBox="0 0 7 7"><path d="M6.5 0.5v6h-6z" fill="#444"></path></svg>
<div class="cj" style="position: absolute; left: 73px; top: 477px; white-space: nowrap; font-size: 12px; color: rgb(68, 68, 68); line-height: 16px; width: 128px; text-align: justify; text-align-last: justify;">2.5 安全管理体系与措施</div>
<div class="cj" style="position: absolute; left: 89px; top: 498px; white-space: nowrap; font-size: 12px; color: rgb(68, 68, 68); line-height: 16px; width: 102px; text-align: justify; text-align-last: justify;">2.5.1 人员保护措施</div>
<div class="cj" style="position: absolute; left: 89px; top: 519px; white-space: nowrap; font-size: 12px; color: rgb(68, 68, 68); line-height: 16px; width: 102px; text-align: justify; text-align-last: justify;">2.5.2 环境保护措施</div>
<div class="cj" style="position: absolute; left: 89px; top: 540px; white-space: nowrap; font-size: 12px; color: rgb(68, 68, 68); line-height: 16px; width: 150.7px; text-align: justify; text-align-last: justify;">2.5.3 建立HSE管理组织机构</div>
<div class="cj" style="position: absolute; left: 89px; top: 561px; white-space: nowrap; font-size: 12px; color: rgb(68, 68, 68); line-height: 16px; width: 232px; text-align: justify; text-align-last: justify;">2.5.4 零伤害、零污染、零事故及危废物处...</div>
<svg style="left:73px;top:585px" width="7" height="7" viewBox="0 0 7 7"><path d="M6.5 0.5v6h-6z" fill="#444"></path></svg>
<div class="cj" style="position: absolute; left: 89px; top: 582px; white-space: nowrap; font-size: 12px; color: rgb(68, 68, 68); line-height: 16px; width: 102px; text-align: justify; text-align-last: justify;">2.5.5 安全管理体系</div>
<div style="position:absolute;left:100px;top:600px;width:224px;height:20px;background:#ffec85"></div>
<div class="cj" style="position: absolute; left: 105px; top: 603px; white-space: nowrap; font-size: 12px; color: rgb(68, 68, 68); line-height: 16px; width: 160px; text-align: justify; text-align-last: justify;">2.5.5.1 电焊工安全生产责任制</div>
<div style="position:absolute;left:100px;top:621px;width:224px;height:20px;background:#ffec85"></div>
<div class="cj" style="position: absolute; left: 105px; top: 624px; white-space: nowrap; font-size: 12px; color: rgb(68, 68, 68); line-height: 16px; width: 160px; text-align: justify; text-align-last: justify;">2.5.5.2 气焊工安全生产责任制</div>
<div style="position:absolute;left:100px;top:642px;width:224px;height:20px;background:#ffec85"></div>
<div class="cj" style="position: absolute; left: 105px; top: 645px; white-space: nowrap; font-size: 12px; color: rgb(68, 68, 68); line-height: 16px; width: 124px; text-align: justify; text-align-last: justify;">2.5.5.3 兼职安全员职责</div>
<div class="cj" style="position: absolute; left: 105px; top: 666px; white-space: nowrap; font-size: 12px; color: rgb(68, 68, 68); line-height: 16px; width: 136px; text-align: justify; text-align-last: justify;">2.5.5.4 安全教育培训制度</div>
<div class="cj" style="position: absolute; left: 105px; top: 687px; white-space: nowrap; font-size: 12px; color: rgb(68, 68, 68); line-height: 16px; width: 148px; text-align: justify; text-align-last: justify;">2.5.5.5 安全教育培训的内容</div>
<div style="position:absolute;left:100px;top:705px;width:224px;height:20px;background:#c5d8f1"></div>
<div class="cj" style="position: absolute; left: 105px; top: 708px; white-space: nowrap; font-size: 12px; color: rgb(68, 68, 68); line-height: 16px; width: 112px; text-align: justify; text-align-last: justify;">2.5.5.6 安全技术措施</div>
<div class="cj" style="position: absolute; left: 105px; top: 729px; white-space: nowrap; font-size: 12px; color: rgb(68, 68, 68); line-height: 16px; width: 124px; text-align: justify; text-align-last: justify;">2.5.5.7 应急程序及预案</div>
<div class="cj" style="position: absolute; left: 105px; top: 750px; white-space: nowrap; font-size: 12px; color: rgb(68, 68, 68); line-height: 16px; width: 148px; text-align: justify; text-align-last: justify;">2.5.5.8 质量目标及保证措施</div>
<div class="cj" style="position: absolute; left: 105px; top: 771px; white-space: nowrap; font-size: 12px; color: rgb(68, 68, 68); line-height: 16px; width: 88.7px; text-align: justify; text-align-last: justify;">2.5.5.9 HSE方案</div>
<svg style="left:57px;top:795px" width="7" height="7" viewBox="0 0 7 7"><path d="M6.5 0.5v6h-6z" fill="#444"></path></svg>
<div class="cj" style="position: absolute; left: 73px; top: 792px; white-space: nowrap; font-size: 12px; color: rgb(68, 68, 68); line-height: 16px; width: 68px; text-align: justify; text-align-last: justify;">2.6 企业素质</div>
<div class="cj" style="position: absolute; left: 89px; top: 813px; white-space: nowrap; font-size: 12px; color: rgb(68, 68, 68); line-height: 16px; width: 90px; text-align: justify; text-align-last: justify;">2.6.1 设备明细表</div>
<div class="cj" style="position: absolute; left: 89px; top: 834px; white-space: nowrap; font-size: 12px; color: rgb(68, 68, 68); line-height: 16px; width: 90px; text-align: justify; text-align-last: justify;">2.6.2 人员明细表</div>
<div class="cj" style="position: absolute; left: 57px; top: 855px; white-space: nowrap; font-size: 12px; color: rgb(68, 68, 68); line-height: 16px; width: 260px; text-align: justify; text-align-last: justify;">3 单位负责人为同一人或存在控股、管理关系的...</div>
<div class="cj" style="position: absolute; left: 57px; top: 876px; white-space: nowrap; font-size: 12px; color: rgb(68, 68, 68); line-height: 16px; width: 260px; text-align: justify; text-align-last: justify;">4 与招标人不存在可能影响招标公正性的利害关...</div>
<div class="cj" style="position: absolute; left: 57px; top: 897px; white-space: nowrap; font-size: 12px; color: rgb(68, 68, 68); line-height: 16px; width: 260px; text-align: justify; text-align-last: justify;">5 中标后、签订合同前按照辽河油田公司要求及...</div>
<div class="cj" style="position: absolute; left: 57px; top: 918px; white-space: nowrap; font-size: 12px; color: rgb(68, 68, 68); line-height: 16px; width: 260px; text-align: justify; text-align-last: justify;">6 中标后施工作业前为进入现场作业人员购买安...</div>
<svg style="left:41px;top:942px" width="7" height="7" viewBox="0 0 7 7"><path d="M6.5 0.5v6h-6z" fill="#444"></path></svg>
<div class="cj" style="position: absolute; left: 57px; top: 939px; white-space: nowrap; font-size: 12px; color: rgb(68, 68, 68); line-height: 16px; width: 178px; text-align: justify; text-align-last: justify;">7 投标人认为需要提交的其他资料</div>
<div class="cj" style="position: absolute; left: 73px; top: 960px; white-space: nowrap; font-size: 12px; color: rgb(68, 68, 68); line-height: 16px; width: 104px; text-align: justify; text-align-last: justify;">7.1 投标人自律守则</div>
<div class="cj" style="position: absolute; left: 73px; top: 981px; white-space: nowrap; font-size: 12px; color: rgb(68, 68, 68); line-height: 16px; width: 164px; text-align: justify; text-align-last: justify;">7.2 投标人不得存在的其他情形</div>
<div style="position:absolute;left:356px;top:157px;width:29px;height:27px;background:#dadada"></div>
<div style="position:absolute;left:360px;top:161px;width:21px;height:20px;background:#fafafa"></div>
<svg style="left:367px;top:169px" width="7" height="7" viewBox="0 0 7 7"><path d="M1 0v6h6" fill="none" stroke="#444" stroke-width="2"></path></svg>
<div style="position:absolute;left:361px;top:290px;width:17px;height:82px;background:#c6c6c6"></div>
<div style="position:absolute;left:361px;top:372px;width:17px;height:644px;background:#fff"></div>
<div style="position:absolute;left:361px;top:291.9px;width:20px;height:12px;transform:rotate(-90deg);font-size:10px;line-height:12px;text-align:center;color:#333">4</div>
<div style="position:absolute;left:368px;top:306px;width:6px;height:1px;background:#333"></div>
<div style="position:absolute;left:361px;top:327.7px;width:20px;height:12px;transform:rotate(-90deg);font-size:10px;line-height:12px;text-align:center;color:#333">2</div>
<div style="position:absolute;left:368px;top:324px;width:6px;height:1px;background:#333"></div>
<div style="position:absolute;left:368px;top:342px;width:6px;height:1px;background:#333"></div>
<div style="position:absolute;left:368px;top:360px;width:6px;height:1px;background:#333"></div>
<div style="position:absolute;left:368px;top:378px;width:6px;height:1px;background:#333"></div>
<div style="position:absolute;left:361px;top:399.3px;width:20px;height:12px;transform:rotate(-90deg);font-size:10px;line-height:12px;text-align:center;color:#333">2</div>
<div style="position:absolute;left:368px;top:396px;width:6px;height:1px;background:#333"></div>
<div style="position:absolute;left:368px;top:414px;width:6px;height:1px;background:#333"></div>
<div style="position:absolute;left:361px;top:435.1px;width:20px;height:12px;transform:rotate(-90deg);font-size:10px;line-height:12px;text-align:center;color:#333">4</div>
<div style="position:absolute;left:368px;top:432px;width:6px;height:1px;background:#333"></div>
<div style="position:absolute;left:368px;top:450px;width:6px;height:1px;background:#333"></div>
<div style="position:absolute;left:361px;top:470.9px;width:20px;height:12px;transform:rotate(-90deg);font-size:10px;line-height:12px;text-align:center;color:#333">6</div>
<div style="position:absolute;left:368px;top:467px;width:6px;height:1px;background:#333"></div>
<div style="position:absolute;left:368px;top:485px;width:6px;height:1px;background:#333"></div>
<div style="position:absolute;left:361px;top:506.7px;width:20px;height:12px;transform:rotate(-90deg);font-size:10px;line-height:12px;text-align:center;color:#333">8</div>
<div style="position:absolute;left:368px;top:503px;width:6px;height:1px;background:#333"></div>
<div style="position:absolute;left:368px;top:521px;width:6px;height:1px;background:#333"></div>
<div style="position:absolute;left:361px;top:542.5px;width:20px;height:12px;transform:rotate(-90deg);font-size:10px;line-height:12px;text-align:center;color:#333">10</div>
<div style="position:absolute;left:368px;top:539px;width:6px;height:1px;background:#333"></div>
<div style="position:absolute;left:368px;top:557px;width:6px;height:1px;background:#333"></div>
<div style="position:absolute;left:361px;top:578.3px;width:20px;height:12px;transform:rotate(-90deg);font-size:10px;line-height:12px;text-align:center;color:#333">12</div>
<div style="position:absolute;left:368px;top:575px;width:6px;height:1px;background:#333"></div>
<div style="position:absolute;left:368px;top:593px;width:6px;height:1px;background:#333"></div>
<div style="position:absolute;left:361px;top:614.1px;width:20px;height:12px;transform:rotate(-90deg);font-size:10px;line-height:12px;text-align:center;color:#333">14</div>
<div style="position:absolute;left:368px;top:611px;width:6px;height:1px;background:#333"></div>
<div style="position:absolute;left:368px;top:629px;width:6px;height:1px;background:#333"></div>
<div style="position:absolute;left:361px;top:649.9px;width:20px;height:12px;transform:rotate(-90deg);font-size:10px;line-height:12px;text-align:center;color:#333">16</div>
<div style="position:absolute;left:368px;top:646px;width:6px;height:1px;background:#333"></div>
<div style="position:absolute;left:368px;top:664px;width:6px;height:1px;background:#333"></div>
<div style="position:absolute;left:361px;top:685.7px;width:20px;height:12px;transform:rotate(-90deg);font-size:10px;line-height:12px;text-align:center;color:#333">18</div>
<div style="position:absolute;left:368px;top:682px;width:6px;height:1px;background:#333"></div>
<div style="position:absolute;left:368px;top:700px;width:6px;height:1px;background:#333"></div>
<div style="position:absolute;left:361px;top:721.5px;width:20px;height:12px;transform:rotate(-90deg);font-size:10px;line-height:12px;text-align:center;color:#333">20</div>
<div style="position:absolute;left:368px;top:718px;width:6px;height:1px;background:#333"></div>
<div style="position:absolute;left:368px;top:736px;width:6px;height:1px;background:#333"></div>
<div style="position:absolute;left:361px;top:757.3px;width:20px;height:12px;transform:rotate(-90deg);font-size:10px;line-height:12px;text-align:center;color:#333">22</div>
<div style="position:absolute;left:368px;top:754px;width:6px;height:1px;background:#333"></div>
<div style="position:absolute;left:368px;top:772px;width:6px;height:1px;background:#333"></div>
<div style="position:absolute;left:361px;top:793.1px;width:20px;height:12px;transform:rotate(-90deg);font-size:10px;line-height:12px;text-align:center;color:#333">24</div>
<div style="position:absolute;left:368px;top:790px;width:6px;height:1px;background:#333"></div>
<div style="position:absolute;left:368px;top:808px;width:6px;height:1px;background:#333"></div>
<div style="position:absolute;left:361px;top:828.9px;width:20px;height:12px;transform:rotate(-90deg);font-size:10px;line-height:12px;text-align:center;color:#333">26</div>
<div style="position:absolute;left:368px;top:825px;width:6px;height:1px;background:#333"></div>
<div style="position:absolute;left:368px;top:843px;width:6px;height:1px;background:#333"></div>
<div style="position:absolute;left:361px;top:864.7px;width:20px;height:12px;transform:rotate(-90deg);font-size:10px;line-height:12px;text-align:center;color:#333">28</div>
<div style="position:absolute;left:368px;top:861px;width:6px;height:1px;background:#333"></div>
<div style="position:absolute;left:368px;top:879px;width:6px;height:1px;background:#333"></div>
<div style="position:absolute;left:361px;top:900.5px;width:20px;height:12px;transform:rotate(-90deg);font-size:10px;line-height:12px;text-align:center;color:#333">30</div>
<div style="position:absolute;left:368px;top:897px;width:6px;height:1px;background:#333"></div>
<div style="position:absolute;left:368px;top:915px;width:6px;height:1px;background:#333"></div>
<div style="position:absolute;left:361px;top:936.3px;width:20px;height:12px;transform:rotate(-90deg);font-size:10px;line-height:12px;text-align:center;color:#333">32</div>
<div style="position:absolute;left:368px;top:933px;width:6px;height:1px;background:#333"></div>
<div style="position:absolute;left:368px;top:951px;width:6px;height:1px;background:#333"></div>
<div style="position:absolute;left:361px;top:972.1px;width:20px;height:12px;transform:rotate(-90deg);font-size:10px;line-height:12px;text-align:center;color:#333">34</div>
<div style="position:absolute;left:368px;top:969px;width:6px;height:1px;background:#333"></div>
<div style="position:absolute;left:368px;top:987px;width:6px;height:1px;background:#333"></div>
<div style="position:absolute;left:361px;top:1007.9px;width:20px;height:12px;transform:rotate(-90deg);font-size:10px;line-height:12px;text-align:center;color:#333">36</div>
<div style="position:absolute;left:368px;top:1004px;width:6px;height:1px;background:#333"></div>
<div style="position:absolute;left:1153px;top:162px;width:80px;height:16px;background:#c6c6c6"></div>
<div style="position:absolute;left:1233px;top:162px;width:517px;height:16px;background:#fff"></div>
<div style="position:absolute;left:1750px;top:162px;width:80px;height:16px;background:#c6c6c6"></div>
<div style="position:absolute;left:1151.3px;top:165px;width:20px;text-align:center;font-size:10px;line-height:12px;color:#444">6</div>
<div style="position:absolute;left:1175.2px;top:165px;width:20px;text-align:center;font-size:10px;line-height:12px;color:#444">4</div>
<div style="position:absolute;left:1199.1px;top:165px;width:20px;text-align:center;font-size:10px;line-height:12px;color:#444">2</div>
<div style="position:absolute;left:1246.9px;top:165px;width:20px;text-align:center;font-size:10px;line-height:12px;color:#444">2</div>
<div style="position:absolute;left:1270.8px;top:165px;width:20px;text-align:center;font-size:10px;line-height:12px;color:#444">4</div>
<div style="position:absolute;left:1294.7px;top:165px;width:20px;text-align:center;font-size:10px;line-height:12px;color:#444">6</div>
<div style="position:absolute;left:1318.6px;top:165px;width:20px;text-align:center;font-size:10px;line-height:12px;color:#444">8</div>
<div style="position:absolute;left:1342.5px;top:165px;width:20px;text-align:center;font-size:10px;line-height:12px;color:#444">10</div>
<div style="position:absolute;left:1366.4px;top:165px;width:20px;text-align:center;font-size:10px;line-height:12px;color:#444">12</div>
<div style="position:absolute;left:1390.3px;top:165px;width:20px;text-align:center;font-size:10px;line-height:12px;color:#444">14</div>
<div style="position:absolute;left:1414.2px;top:165px;width:20px;text-align:center;font-size:10px;line-height:12px;color:#444">16</div>
<div style="position:absolute;left:1438.1px;top:165px;width:20px;text-align:center;font-size:10px;line-height:12px;color:#444">18</div>
<div style="position:absolute;left:1462.0px;top:165px;width:20px;text-align:center;font-size:10px;line-height:12px;color:#444">20</div>
<div style="position:absolute;left:1485.9px;top:165px;width:20px;text-align:center;font-size:10px;line-height:12px;color:#444">22</div>
<div style="position:absolute;left:1509.8px;top:165px;width:20px;text-align:center;font-size:10px;line-height:12px;color:#444">24</div>
<div style="position:absolute;left:1533.7px;top:165px;width:20px;text-align:center;font-size:10px;line-height:12px;color:#444">26</div>
<div style="position:absolute;left:1557.6px;top:165px;width:20px;text-align:center;font-size:10px;line-height:12px;color:#444">28</div>
<div style="position:absolute;left:1581.5px;top:165px;width:20px;text-align:center;font-size:10px;line-height:12px;color:#444">30</div>
<div style="position:absolute;left:1605.4px;top:165px;width:20px;text-align:center;font-size:10px;line-height:12px;color:#444">32</div>
<div style="position:absolute;left:1629.3px;top:165px;width:20px;text-align:center;font-size:10px;line-height:12px;color:#444">34</div>
<div style="position:absolute;left:1653.2px;top:165px;width:20px;text-align:center;font-size:10px;line-height:12px;color:#444">36</div>
<div style="position:absolute;left:1677.1px;top:165px;width:20px;text-align:center;font-size:10px;line-height:12px;color:#444">38</div>
<div style="position:absolute;left:1701.0px;top:165px;width:20px;text-align:center;font-size:10px;line-height:12px;color:#444">40</div>
<div style="position:absolute;left:1724.9px;top:165px;width:20px;text-align:center;font-size:10px;line-height:12px;color:#444">42</div>
<div style="position:absolute;left:1748.8px;top:165px;width:20px;text-align:center;font-size:10px;line-height:12px;color:#444">44</div>
<div style="position:absolute;left:1772.7px;top:165px;width:20px;text-align:center;font-size:10px;line-height:12px;color:#444">46</div>
<div style="position:absolute;left:1796.6px;top:165px;width:20px;text-align:center;font-size:10px;line-height:12px;color:#444">48</div>
<svg style="left:1228px;top:159px" width="12" height="11" viewBox="0 0 12 11"><path d="M0.5 0.5h11v4l-5.5 5.5-5.5-5.5z" fill="#fff" stroke="#666"></path></svg>
<svg style="left:1286px;top:170px" width="12" height="17" viewBox="0 0 12 17"><path d="M0.5 16.5v-10l5.5-5.5 5.5 5.5v10z M0.5 11h11" fill="#fff" stroke="#666"></path></svg>
<svg style="left:1745px;top:171px" width="12" height="10" viewBox="0 0 12 10"><path d="M0.5 9.5v-4l5.5-5 5.5 5v4z" fill="#fff" stroke="#666"></path></svg>
<div style="position:absolute;left:463px;top:187px;width:677px;height:92px;background:#fff;border-left:1px solid #c6c6c6;border-right:1px solid #c6c6c6;border-bottom:1px solid #c6c6c6;"></div>
<div style="position:absolute;left:1154px;top:187px;width:677px;height:92px;background:#fff;border-left:1px solid #c6c6c6;border-right:1px solid #c6c6c6;border-bottom:1px solid #c6c6c6;"></div>
<div style="position:absolute;left:463px;top:291px;width:677px;height:740px;background:#fff;border-left:1px solid #c6c6c6;border-right:1px solid #c6c6c6;border-bottom:1px solid #c6c6c6;border-top:1px solid #c6c6c6"></div>
<div style="position:absolute;left:1154px;top:291px;width:677px;height:740px;background:#fff;border-left:1px solid #c6c6c6;border-right:1px solid #c6c6c6;border-bottom:1px solid #c6c6c6;border-top:1px solid #c6c6c6"></div>
<div style="position:absolute;left:523px;top:199px;width:21px;height:1px;background:#a6a6a6"></div>
<div style="position:absolute;left:543px;top:199px;width:1px;height:20px;background:#a6a6a6"></div>
<div style="position:absolute;left:1060px;top:199px;width:21px;height:1px;background:#a6a6a6"></div>
<div style="position:absolute;left:1060px;top:199px;width:1px;height:20px;background:#a6a6a6"></div>
<div style="position:absolute;left:543px;top:353px;width:518px;height:1px;background:#8a8a8a"></div>
<div style="position:absolute;left:543px;top:353px;width:1px;height:18px;background:#a6a6a6"></div>
<div style="position:absolute;left:523px;top:370px;width:21px;height:1px;background:#a6a6a6"></div>
<div style="position:absolute;left:1060px;top:353px;width:1px;height:18px;background:#a6a6a6"></div>
<div style="position:absolute;left:1060px;top:370px;width:21px;height:1px;background:#a6a6a6"></div>
<div style="position:absolute;left:1214px;top:199px;width:21px;height:1px;background:#a6a6a6"></div>
<div style="position:absolute;left:1234px;top:199px;width:1px;height:20px;background:#a6a6a6"></div>
<div style="position:absolute;left:1751px;top:199px;width:21px;height:1px;background:#a6a6a6"></div>
<div style="position:absolute;left:1751px;top:199px;width:1px;height:20px;background:#a6a6a6"></div>
<div style="position:absolute;left:1234px;top:353px;width:518px;height:1px;background:#8a8a8a"></div>
<div style="position:absolute;left:1234px;top:353px;width:1px;height:18px;background:#a6a6a6"></div>
<div style="position:absolute;left:1214px;top:370px;width:21px;height:1px;background:#a6a6a6"></div>
<div style="position:absolute;left:1751px;top:353px;width:1px;height:18px;background:#a6a6a6"></div>
<div style="position:absolute;left:1751px;top:370px;width:21px;height:1px;background:#a6a6a6"></div>
<div style="position:absolute;left:794px;top:211px;white-space:nowrap;font-size:10px;color:#666;line-height:12px">372<span style="color:#999">↵</span></div>
<div style="position:absolute;left:1486px;top:211px;white-space:nowrap;font-size:10px;color:#666;line-height:12px">373<span style="color:#999">↵</span></div>
<div class="cj" style="position: absolute; left: 757px; top: 339px; white-space: nowrap; font-size: 10px; color: rgb(136, 136, 136); line-height: 12px; letter-spacing: 0px; width: 118px; text-align: justify; text-align-last: justify;">盘锦金福源商贸有限公司<span style="color:#999">↵</span></div>
<div class="cj" style="position: absolute; left: 1448px; top: 339px; white-space: nowrap; font-size: 10px; color: rgb(136, 136, 136); line-height: 12px; letter-spacing: 0px; width: 118px; text-align: justify; text-align-last: justify;">盘锦金福源商贸有限公司<span style="color:#999">↵</span></div>
<div class="h" style="position: absolute; left: 537px; top: 371px; white-space: nowrap; width: 168.5px; text-align: justify; text-align-last: justify;"><span style="display:inline-block;width:3px;height:3px;background:#000;vertical-align:4px;margin-right:5px"></span><span style="font-family:Liberation Serif">2.&nbsp;5.&nbsp;5.&nbsp;3&nbsp;</span>兼职安全员职责<span class="rm">↵</span></div>
<div class="doc just" style="position:absolute;left:573px;top:395px;width:487px;white-space:nowrap"><span style="letter-spacing:2px">(1)</span>兼职安全员在安全负责人领导下，负责本部门生产安全工作，协助安全负责人做好贯彻上</div>
<div class="doc just" style="position:absolute;left:543px;top:422px;width:517px;white-space:nowrap">级安全生产的指示和规定工作，并检查督促执行。处理本部门生产安全日常事务和检查监督工作。</div>
<div class="doc" style="position: absolute; left: 543px; top: 448px; white-space: nowrap; width: 478px; text-align: justify; text-align-last: justify;">指导班组长做好班组安全工作，做好班前安全布置、班中安全检查、班后安全总结工作。<span class="rm">↵</span></div>
<div class="doc" style="position: absolute; left: 573px; top: 475px; white-space: nowrap; width: 402.7px; text-align: justify; text-align-last: justify;"><span style="letter-spacing:2px">(2)</span>负责检查有关安全生产管理制度和安全技术操作规程落实及执行情况。<span class="rm">↵</span></div>
<div class="doc just" style="position:absolute;left:573px;top:502px;width:487px;white-space:nowrap"><span style="letter-spacing:2px">(3)</span>负责协助安全负责人编制安全技术措施计划和不安全隐患整改方案，并负责及时上报和检</div>
<div class="doc" style="position: absolute; left: 543px; top: 528px; white-space: nowrap; width: 58px; text-align: justify; text-align-last: justify;">查落实。<span class="rm">↵</span></div>
<div class="doc just" style="position:absolute;left:573px;top:555px;width:487px;white-space:nowrap"><span style="letter-spacing:2px">(4)</span>做好本部门职工的安全思想、安全技术教育与考核工作，负责对新进厂员工进行施工队级</div>
<div class="doc" style="position: absolute; left: 543px; top: 582px; white-space: nowrap; width: 70px; text-align: justify; text-align-last: justify;">安全教育。<span class="rm">↵</span></div>
<div class="doc" style="position: absolute; left: 573px; top: 609px; white-space: nowrap; width: 402.7px; text-align: justify; text-align-last: justify;"><span style="letter-spacing:2px">(5)</span>加强现场巡查；检查有关消防设施、设备、器材，使之保持良好状态。<span class="rm">↵</span></div>
<div class="doc" style="position: absolute; left: 573px; top: 635px; white-space: nowrap; width: 438.7px; text-align: justify; text-align-last: justify;"><span style="letter-spacing:2px">(6)</span>负责做好安全装置、防护用品、<span style="background:#fff06e">消防器材</span>的管理工作安全，并提出改进建议。<span class="rm">↵</span></div>
<div class="doc just" style="position:absolute;left:573px;top:662px;width:487px;white-space:nowrap"><span style="letter-spacing:2px">(7)</span>负责本部门的安全检查，发现隐患及时督促整改，重大隐患及时上报，并有权制止违章行</div>
<div class="doc" style="position: absolute; left: 543px; top: 689px; white-space: nowrap; width: 322px; text-align: justify; text-align-last: justify;">为。并负责伤亡事故的统计上报，参与事故的调查和分析。<span class="rm">↵</span></div>
<div class="doc" style="position:absolute;left:573px;top:709px"><span class="rm">↵</span></div>
<div class="h" style="position: absolute; left: 537px; top: 732px; white-space: nowrap; width: 182.5px; text-align: justify; text-align-last: justify;"><span style="display:inline-block;width:3px;height:3px;background:#000;vertical-align:4px;margin-right:5px"></span><span style="font-family:Liberation Serif">2.&nbsp;5.&nbsp;5.&nbsp;4&nbsp;</span>安全教育培训制度<span class="rm">↵</span></div>
<div class="doc just" style="position:absolute;left:573px;top:756px;width:487px;white-space:nowrap"><span style="letter-spacing:2px">(1)</span>本项目开工前对参加本项目施工的所有作业人员进行一次安全教育培训，经考核合格后，</div>
<div class="doc" style="position: absolute; left: 543px; top: 783px; white-space: nowrap; width: 70px; text-align: justify; text-align-last: justify;">方可上岗。<span class="rm">↵</span></div>
<div class="doc just" style="position:absolute;left:573px;top:810px;width:487px;white-space:nowrap"><span style="letter-spacing:2px">(2)</span>安全负责人、兼职安全员应按照国家有关规定要求，参加政府和相关部门的安全生产教育</div>
<div class="doc" style="position: absolute; left: 543px; top: 836px; white-space: nowrap; width: 166px; text-align: justify; text-align-last: justify;">培训，并考取安全资格证书。<span class="rm">↵</span></div>
<div class="doc just" style="position:absolute;left:573px;top:863px;width:487px;white-space:nowrap"><span style="letter-spacing:2px">(3)</span>从事特种作业的人员，应按照国家有关要求进行专业性安全技术培训。经考试合格，取得特</div>
<div class="doc" style="position: absolute; left: 543px; top: 890px; white-space: nowrap; width: 442px; text-align: justify; text-align-last: justify;">种作业操作证后，并按规定参加本单位安全教育培训。经考试合格后，方可上岗。<span class="rm">↵</span></div>
<div class="doc" style="position:absolute;left:573px;top:909px"><span class="rm">↵</span></div>
<div class="h" style="position: absolute; left: 537px; top: 933px; white-space: nowrap; width: 196.5px; text-align: justify; text-align-last: justify;"><span style="display:inline-block;width:3px;height:3px;background:#000;vertical-align:4px;margin-right:5px"></span><span style="font-family:Liberation Serif">2.&nbsp;5.&nbsp;5.&nbsp;5&nbsp;</span>安全教育培训的内容<span class="rm">↵</span></div>
<div class="doc" style="position: absolute; left: 573px; top: 957px; white-space: nowrap; width: 258.7px; text-align: justify; text-align-last: justify;"><span style="letter-spacing:2px">(1)</span>本公司安全生产情况及安全生产基本知识；<span class="rm">↵</span></div>
<div class="doc" style="position: absolute; left: 573px; top: 984px; white-space: nowrap; width: 210.7px; text-align: justify; text-align-last: justify;"><span style="letter-spacing:2px">(2)</span>本公司安全生产的各项规章制度；<span class="rm">↵</span></div>
<div class="doc" style="position: absolute; left: 573px; top: 1010px; white-space: nowrap; width: 222.7px; text-align: justify; text-align-last: justify;"><span style="letter-spacing:2px">(3)</span>各类岗位人员安全生产权利和义务；<span class="rm">↵</span></div>
<div class="doc" style="position:absolute;left:1260px;top:372px"><span class="rm">↵</span></div>
<div class="h" style="position: absolute; left: 1228px; top: 395px; white-space: nowrap; width: 154.5px; text-align: justify; text-align-last: justify;"><span style="display:inline-block;width:3px;height:3px;background:#000;vertical-align:4px;margin-right:5px"></span><span style="font-family:Liberation Serif">2.&nbsp;5.&nbsp;5.&nbsp;6&nbsp;</span>安全技术措施<span class="rm">↵</span></div>
<div class="doc just" style="position:absolute;left:1260px;top:419px;width:491px;white-space:nowrap"><span style="letter-spacing:1px">1)</span><span style="display:inline-block;width:3px"></span>贯彻国家“安全第一，预防为主”的安全生产方针，认真落实安全生产责任制，严格执行安</div>
<div class="doc just" style="position:absolute;left:1234px;top:446px;width:517px;white-space:nowrap">全管理制度。建立健全合理有效的安全生产管理体系，成立安全领导小组，设置专门安全员，安全</div>
<div class="doc" style="position: absolute; left: 1234px; top: 472px; white-space: nowrap; width: 202px; text-align: justify; text-align-last: justify;">员负责施工中的安全检查监护工作。<span class="rm">↵</span></div>
<div class="doc just" style="position:absolute;left:1260px;top:499px;width:491px;white-space:nowrap"><span style="letter-spacing:1px">2)</span><span style="display:inline-block;width:3px"></span>加强对职工的安全培训教育工作，强化提高所有作业人员的安全意识，不断提高全员的安全</div>
<div class="doc just" style="position:absolute;left:1234px;top:526px;width:517px;white-space:nowrap">意识，掌握安全技能，让工人掌握本工种的安全操作规程及安全知识。施工人员必须经过上岗前的</div>
<div class="doc" style="position: absolute; left: 1234px; top: 552px; white-space: nowrap; width: 250px; text-align: justify; text-align-last: justify;">安全生产教育培训，经考核合格后方可上岗。<span class="rm">↵</span></div>
<div class="doc just" style="position:absolute;left:1260px;top:579px;width:491px;white-space:nowrap"><span style="letter-spacing:1px">3)</span><span style="display:inline-block;width:3px"></span>各施工班组在施工过程中，要严格执行安全生产规章制度和安全、技术操作规程。作业人员</div>
<div class="doc" style="position: absolute; left: 1234px; top: 606px; white-space: nowrap; width: 478px; text-align: justify; text-align-last: justify;">必须佩戴劳动防护用品，并采取相应的安全措施，特种设备作业人员必须做到持证上岗。<span class="rm">↵</span></div>
<div class="doc just" style="position:absolute;left:1260px;top:632px;width:491px;white-space:nowrap"><span style="letter-spacing:1px">4)</span><span style="display:inline-block;width:3px"></span>高处作业必须遵守有关作业规程，作业人员必须佩戴安全带、栓挂好安全绳。设置必要的安</div>
<div class="doc just" style="position:absolute;left:1234px;top:659px;width:517px;white-space:nowrap">全防护网或防护栏杆，施工用的高凳、梯子、高架车等。必须设置防护措施。，在使用前必须认真检</div>
<div class="doc" style="position: absolute; left: 1234px; top: 685px; white-space: nowrap; width: 334px; text-align: justify; text-align-last: justify;">查其牢固性。梯外端应采取防滑措施，应有人监护或设围栏。<span class="rm">↵</span></div>
<div class="doc just" style="position:absolute;left:1260px;top:712px;width:491px;white-space:nowrap"><span style="letter-spacing:1px">5)</span><span style="display:inline-block;width:3px"></span>施工现场严格执行安全防火制度，消防措施完备，清洁卫生器材完好，以确保万无一失。必</div>
<div class="doc" style="position: absolute; left: 1234px; top: 739px; white-space: nowrap; width: 370px; text-align: justify; text-align-last: justify;">须遵守国家有关消防规定，各种消防设施配置齐全，并由专人负责。<span class="rm">↵</span></div>
<div class="doc just" style="position:absolute;left:1260px;top:765px;width:491px;white-space:nowrap"><span style="letter-spacing:1px">6)</span><span style="display:inline-block;width:3px"></span>施工现场应建立完善的维修用设备例保、检修制度，保证机械设备正常安全运转，有专人检</div>
<div class="doc just" style="position:absolute;left:1234px;top:792px;width:517px;white-space:nowrap">查机动设备，发现问题及时解决。施工用电、现场临时电线路、设施的安装和使用必须按照《施工</div>
<div class="doc just" style="position:absolute;left:1234px;top:819px;width:517px;white-space:nowrap">临时用电安全技术防范》(JGJ46－2005)规定操作，严禁私自拉电或带电作业。使用电气设备、电动</div>
<div class="doc" style="position: absolute; left: 1234px; top: 845px; white-space: nowrap; width: 514px; text-align: justify; text-align-last: justify;">工具应有可靠保护接地，随身携带和使用的工具应搁置于：顺手稳妥的地方，防发生事故伤人。<span class="rm">↵</span></div>
<div class="doc just" style="position:absolute;left:1260px;top:872px;width:491px;white-space:nowrap"><span style="letter-spacing:1px">7)</span><span style="display:inline-block;width:3px"></span>施工现场必须杜绝违章指挥、违章作业、违反劳动纪律的“三违”行为。施工现场入口及危</div>
<div class="doc" style="position: absolute; left: 1234px; top: 899px; white-space: nowrap; width: 466px; text-align: justify; text-align-last: justify;">险作业部位应设置必要的提示、警示等各种安全防范标志，避免可能发生的意外伤害。<span class="rm">↵</span></div>
<div class="doc just" style="position:absolute;left:1260px;top:925px;width:491px;white-space:nowrap"><span style="letter-spacing:1px">8)</span><span style="display:inline-block;width:3px"></span>遇到不可抗力的因素(如暴风、雷雨)，影响某些作业施工安全，按有关规定停止作业，以保</div>
<div class="doc" style="position: absolute; left: 1234px; top: 952px; white-space: nowrap; width: 130px; text-align: justify; text-align-last: justify;">障人身、设备等安全。<span class="rm">↵</span></div>
<div class="doc just" style="position:absolute;left:1260px;top:978px;width:491px;white-space:nowrap"><span style="letter-spacing:1px">9)</span><span style="display:inline-block;width:3px"></span>对各施工队安全生产进行定期、不定期检查，对存在事故隐患的将进行停工整改。当发生安</div>
<div class="doc just" style="position:absolute;left:1234px;top:1005px;width:517px;white-space:nowrap">全事故时，由安全生产领导小组负责查原因，提出改进措施，及时上报厂主管领导和部门；发生重</div>
<div style="position:absolute;left:1202px;top:362px;width:578px;height:42px;border:4px solid #cc1020"></div>
<div class="cj" style="position: absolute; left: 1637px; top: 942px; white-space: nowrap; font-size: 21px; color: rgba(120, 120, 120, 0.55); line-height: 24px; width: 133px; text-align: justify; text-align-last: justify;">激活 Windows</div>
<div class="cj" style="position: absolute; left: 1637px; top: 969px; white-space: nowrap; font-size: 15.5px; color: rgba(120, 120, 120, 0.55); line-height: 18px; width: 205.5px; text-align: justify; text-align-last: justify;">转到“设置”以激活 Windows。</div>
<div style="position:absolute;left:7px;top:1016px;width:1917px;height:1px;background:#d6d6d6"></div>
<div style="position:absolute;left:7px;top:1017px;width:1917px;height:21px;background:#f3f3f3"></div>
<div style="position:absolute;left:0px;top:1038px;width:1924px;height:6px;background:#1f2b36"></div>
<div style="position:absolute;left:251px;top:1038px;width:48px;height:6px;background:#a8622a"></div>
<div class="cj" style="position: absolute; left: 18px; top: 1019px; white-space: nowrap; font-size: 12.5px; color: rgb(68, 68, 68); line-height: 16px; width: 120.6px; text-align: justify; text-align-last: justify;">第 375 页，共 395 页</div>
<div class="cj" style="position: absolute; left: 155px; top: 1019px; white-space: nowrap; font-size: 12.5px; color: rgb(68, 68, 68); line-height: 16px; width: 74.7px; text-align: justify; text-align-last: justify;">7/60468 个字</div>
<div class="cj" style="position: absolute; left: 281px; top: 1019px; white-space: nowrap; font-size: 12.5px; color: rgb(68, 68, 68); line-height: 16px; width: 112.3px; text-align: justify; text-align-last: justify;">简体中文(中国大陆)</div>
<div class="cj" style="position: absolute; left: 403px; top: 1019px; white-space: nowrap; font-size: 12.5px; color: rgb(68, 68, 68); line-height: 16px; width: 59px; text-align: justify; text-align-last: justify;">修订: 关闭</div>
<div class="cj" style="position: absolute; left: 495px; top: 1019px; white-space: nowrap; font-size: 12.5px; color: rgb(68, 68, 68); line-height: 16px; font-weight: bold; width: 85.6px; text-align: justify; text-align-last: justify;">辅助功能: 调查</div>
<svg style="left:249px;top:1020px" width="15" height="14" viewBox="0 0 15 14"><path d="M0.5 0.5h6v11l-6 0zM6.5 11.5l-1 2M6.5 0.5h3" fill="none" stroke="#555" stroke-width="0.9"></path><path d="M9 4l4 5M13 4l-4 5" stroke="#555" stroke-width="1"></path></svg>
<svg style="left:477px;top:1020px" width="15" height="15" viewBox="0 0 15 15"><path d="M7 1.5a5.5 5.5 0 1 0 5 3" fill="none" stroke="#555" stroke-width="1.1"></path><circle cx="7" cy="4" r="1" fill="#555"></circle><path d="M9 9l5 5M14 9l-5 5" stroke="#555" stroke-width="1.3"></path></svg>
<div style="position:absolute;left:1661px;top:1017px;width:40px;height:21px;background:#c6c6c6"></div>
<svg style="left:1633px;top:1020px" width="15" height="14" viewBox="0 0 15 14"><path d="M0.5 0.5h6.5v12H0.5zM7.5 0.5H14v12H7.5z" fill="none" stroke="#555"></path><path d="M2 3h4M2 5.5h4M2 8h4M9 3h4M9 5.5h4M9 8h4" stroke="#555" stroke-width="0.8"></path></svg>
<svg style="left:1674px;top:1020px" width="15" height="14" viewBox="0 0 15 14"><rect x="0.5" y="0.5" width="13" height="13" fill="none" stroke="#555"></rect><path d="M3 3.5h8M3 6h8M3 8.5h8M3 11h8" stroke="#555" stroke-width="1"></path></svg>
<svg style="left:1714px;top:1020px" width="15" height="14" viewBox="0 0 15 14"><path d="M8 12.5H0.5V0.5h11v5" fill="none" stroke="#555"></path><path d="M3 3.5h6M3 6h5M3 8.5h4" stroke="#555" stroke-width="0.8"></path><circle cx="11" cy="10" r="3.5" fill="#555"></circle></svg>
<div style="position:absolute;left:1747px;top:1026px;width:8px;height:1px;background:#444"></div>
<div style="position:absolute;left:1760px;top:1027px;width:100px;height:1px;background:#555"></div>
<div style="position:absolute;left:1800px;top:1022px;width:4px;height:11px;background:#444"></div>
<div style="position:absolute;left:1810px;top:1024px;width:1px;height:6px;background:#444"></div>
<div style="position:absolute;left:1865px;top:1026px;width:9px;height:1px;background:#444"></div>
<div style="position:absolute;left:1869px;top:1022px;width:1px;height:9px;background:#444"></div>
<div style="position:absolute;left:1886px;top:1020px;white-space:nowrap;font-size:12px;color:#444;line-height:15px">85%</div>
</body></html>
